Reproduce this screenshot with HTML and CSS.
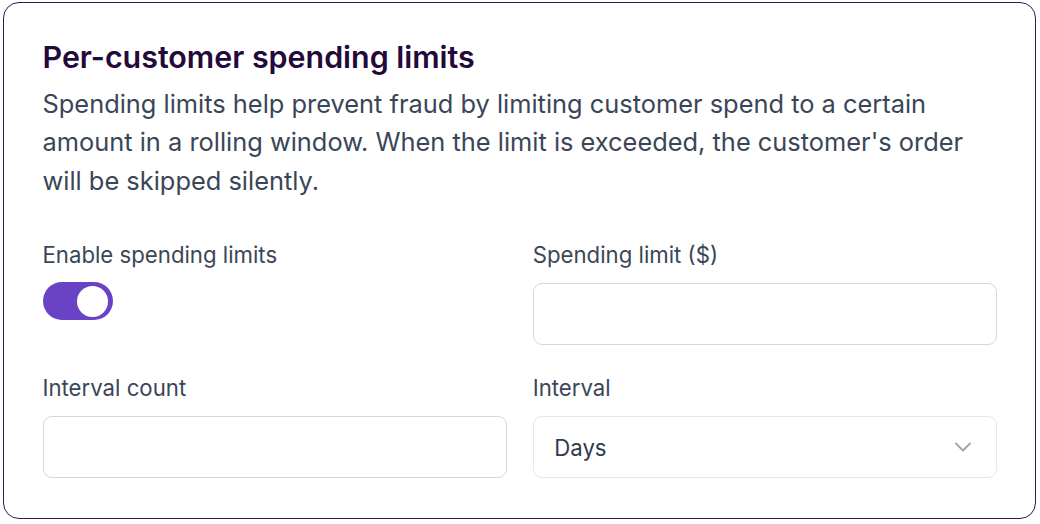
FILE: index.html
```html
<!DOCTYPE html>
<html lang="en">
<head>
    <meta charset="UTF-8">
    <meta name="viewport" content="width=device-width, initial-scale=1.0">
    <title>Per-customer spending limits</title>
    <link rel="stylesheet" href="styles.css">
</head>
<body>

    <div class="card">
        <h2 class="card-title">Per-customer spending limits</h2>
        <p class="card-desc">Spending limits help prevent fraud by limiting customer spend to a certain amount in a rolling window. When the limit is exceeded, the customer's order will be skipped silently.</p>

        <div class="form-grid">
            <div class="field">
                <label class="field-label">Enable spending limits</label>
                <button class="toggle" type="button" aria-pressed="true"><span class="toggle-knob"></span></button>
            </div>
            <div class="field">
                <label class="field-label" for="limit">Spending limit ($)</label>
                <input class="text-input" id="limit" type="text">
            </div>
            <div class="field">
                <label class="field-label" for="count">Interval count</label>
                <input class="text-input" id="count" type="text">
            </div>
            <div class="field">
                <label class="field-label">Interval</label>
                <div class="select">
                    <span>Days</span>
                    <svg width="18" height="10" viewBox="0 0 18 10" fill="none">
                        <path d="M2 1.5l7 7 7-7" stroke="#9ca3af" stroke-width="1.8" stroke-linecap="round" stroke-linejoin="round"/>
                    </svg>
                </div>
            </div>
        </div>
    </div>

</body>
</html>
```

FILE: styles.css
```css
body {
    margin: 0;
    padding: 2px 4px 0 3px;
    background: #fff;
    font-family: Inter, "Noto Sans", sans-serif;
}
.card {
    border: 1.6px solid #33195a;
    border-radius: 16px;
    padding: 36px 38px 39px 38.5px;
    height: 517px;
    box-sizing: border-box;
}
.card-title {
    margin: 0;
    font-size: 30.4px;
    line-height: 36px;
    font-weight: 600;
    color: #24093b;
}
.card-desc {
    margin: 10px 0 0;
    font-size: 25.4px;
    line-height: 38.4px;
    color: #3a4658;
}
.form-grid {
    display: grid;
    grid-template-columns: 1fr 1fr;
    column-gap: 26px;
    row-gap: 28.4px;
    margin-top: 40.5px;
}
.field {
    display: flex;
    flex-direction: column;
    gap: 14.6px;
}
.field-label {
    font-size: 22.2px;
    line-height: 28px;
    color: #3a4658;
}
.toggle {
    width: 70px;
    height: 38px;
    margin-top: -1px;
    border: none;
    border-radius: 19px;
    background: #6a43c4;
    display: flex;
    align-items: center;
    justify-content: flex-end;
    padding: 0 4.5px;
}
.toggle-knob {
    width: 31px;
    height: 31px;
    border-radius: 50%;
    background: #fff;
}
.text-input {
    height: 62px;
    box-sizing: border-box;
    border: 1.5px solid #d3d7de;
    border-radius: 9px;
    background: #fff;
    font: inherit;
    font-size: 22.2px;
    padding: 0 20px;
}
.select {
    height: 62px;
    box-sizing: border-box;
    border: 1.5px solid #e3e7ee;
    border-radius: 9px;
    display: flex;
    align-items: center;
    justify-content: space-between;
    padding: 0 24px 0 20.5px;
    font-size: 22.2px;
    color: #2f3b4d;
}
```
